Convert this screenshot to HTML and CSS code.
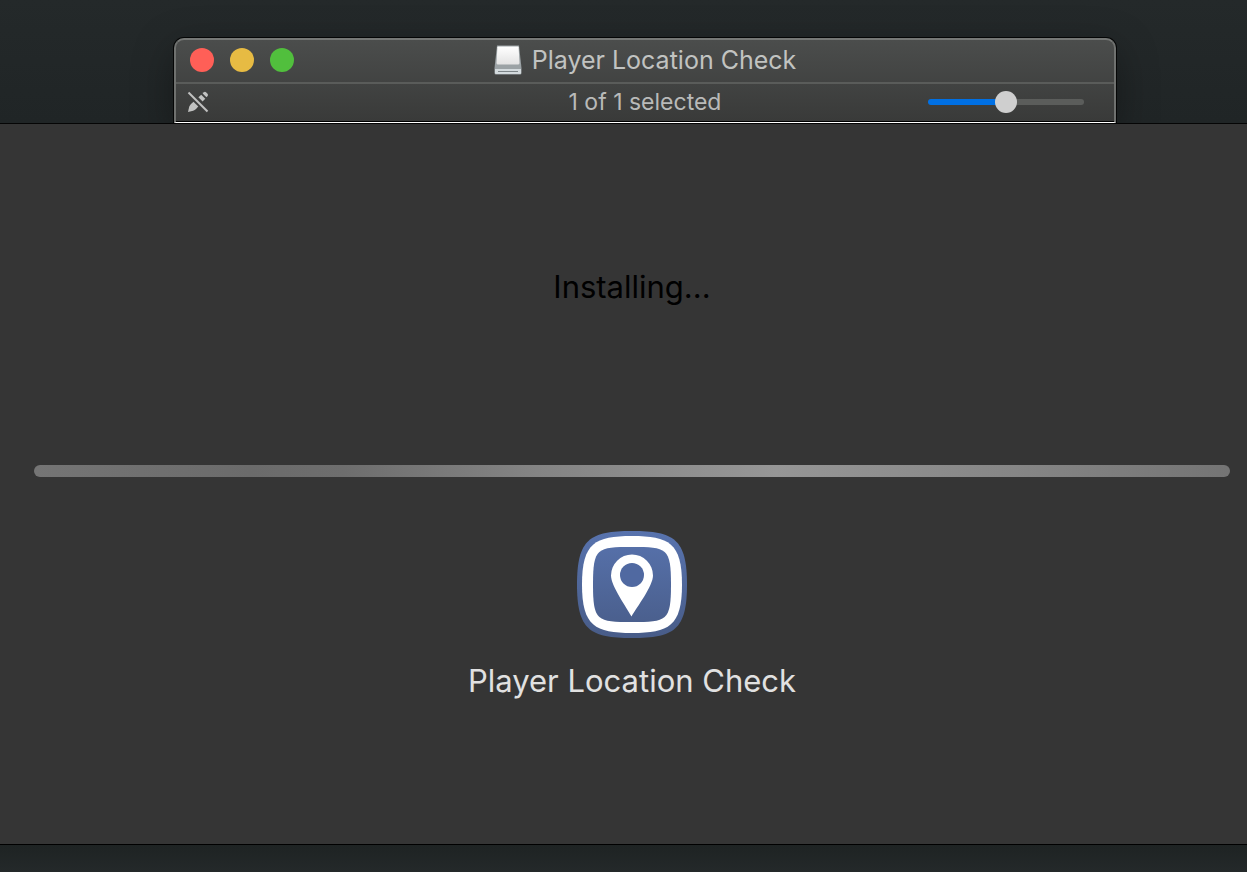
FILE: index.html
```html
<!DOCTYPE html>
<html lang="en">
<head>
    <meta charset="UTF-8">
    <meta name="viewport" content="width=device-width, initial-scale=1.0">
    <title>Player Location Check</title>
    <link rel="stylesheet" href="styles.css">
</head>
<body>
    <section class="finder">
        <header class="title-bar">
            <div class="lights">
                <button type="button" class="light close" aria-label="Close"></button>
                <button type="button" class="light minimize" aria-label="Minimize"></button>
                <button type="button" class="light zoom" aria-label="Zoom"></button>
            </div>
            <div class="title">
                <svg class="disk" viewBox="0 0 28 30" aria-hidden="true">
                    <defs>
                        <linearGradient id="disk-face" x1="0" y1="0" x2="0" y2="1">
                            <stop offset="0" stop-color="#ffffff"/>
                            <stop offset="1" stop-color="#e2e2e2"/>
                        </linearGradient>
                    </defs>
                    <path d="M3 0.5H25L27.5 23V28Q27.5 29.5 26 29.5H2Q0.5 29.5 0.5 28V23Z" fill="#9ba2a5"/>
                    <path d="M4 1.5H24Q24.5 1.5 24.6 2.2L25.5 18Q25.5 19.5 24 19.5H4Q2.5 19.5 2.5 18L3.4 2.2Q3.5 1.5 4 1.5Z" fill="url(#disk-face)"/>
                    <path d="M1 24H27V28Q27 29 26 29H2Q1 29 1 28Z" fill="#d3dadd"/>
                    <path d="M4 26.5H24" stroke="#7d8588" stroke-width="1"/>
                </svg>
                <h1>Player Location Check</h1>
            </div>
        </header>
        <div class="toolbar">
            <svg class="no-edit" viewBox="0 0 22 22" aria-label="Read only" role="img">
                <g fill="#c1c2c1">
                    <path d="M1 21L2.2 15.8Q2.7 14.2 4 12.9L6.5 10.7L11.3 15.5L9 18Q7.8 19.2 6.2 19.7Z"/>
                    <path d="M11.4 6.3L14.2 3.7L18.3 7.8L15.6 10.6Z"/>
                    <path d="M15.6 2.4L16.9 1.2Q18 0.4 19.2 1.4L20.5 2.7Q21.6 4 20.6 5.1L19.5 6.3Z"/>
                </g>
                <path d="M1.5 1.5L20.5 20.5" stroke="#404140" stroke-width="4"/>
                <path d="M1.5 1.5L20.5 20.5" stroke="#c1c2c1" stroke-width="2"/>
            </svg>
            <p class="status">1 of 1 selected</p>
            <input type="range" class="size-slider" min="0" max="100" value="50" aria-label="Icon size">
        </div>
    </section>

    <main class="installer">
        <label class="installing" for="install-progress">Installing...</label>
        <progress id="install-progress" class="progress"></progress>
        <svg class="app-icon" viewBox="0 0 110 107" aria-hidden="true">
            <defs>
                <linearGradient id="app-blue" x1="0" y1="0" x2="0" y2="107" gradientUnits="userSpaceOnUse">
                    <stop offset="0" stop-color="#5873ae"/>
                    <stop offset="1" stop-color="#485c88"/>
                </linearGradient>
            </defs>
            <path d="M55 0C97 0 110 8 110 53.5C110 99 97 107 55 107C13 107 0 99 0 53.5C0 8 13 0 55 0Z" fill="url(#app-blue)"/>
            <path d="M55 5C92 5 105 12 105 53.5C105 95 92 102 55 102C18 102 5 95 5 53.5C5 12 18 5 55 5Z" fill="#ffffff"/>
            <path d="M55 16C90 16 94 17 94 53.5C94 90 90 91 55 91C20 91 16 90 16 53.5C16 17 20 16 55 16Z" fill="url(#app-blue)"/>
            <path d="M54.500 85.500C50 77 34 55 34 44.500A21 21 0 0 1 76 44.500C76 55 60 76 54.500 85.500Z" fill="#ffffff"/>
            <circle cx="55" cy="44" r="12" fill="#5069a1"/>
        </svg>
        <h2 class="app-name">Player Location Check</h2>
    </main>
</body>
</html>
```

FILE: styles.css
```css
* {
    box-sizing: border-box;
    margin: 0;
    padding: 0;
}

body {
    min-height: 100vh;
    display: flex;
    flex-direction: column;
    padding: 38px 0 27px;
    background: linear-gradient(#24292a, #202526 122px, #1e2323 845px, #24292a);
    font-family: Inter, "Liberation Sans", sans-serif;
}

/* Finder window behind the installer */
.finder {
    margin: 0 131px 0 174px;
    border: 2px solid #6f716f;
    border-top-color: #767876;
    border-bottom: 1px solid #ffffff;
    border-radius: 10px 10px 0 0;
    background: linear-gradient(#4b4d4c, #393a39);
    box-shadow: 0 0 0 1px #050606, 0 12px 40px rgba(0, 0, 0, 0.35);
}

.title-bar,
.toolbar {
    display: grid;
    grid-template-columns: 1fr auto 1fr;
    align-items: center;
}

.title-bar {
    height: 44px;
    padding: 0 14px 2px;
    border-bottom: 2px solid #5a5c5a;
}

.lights {
    display: flex;
    gap: 16px;
}

.light {
    width: 24px;
    height: 24px;
    border: none;
    border-radius: 50%;
}

.close {
    background: #ff5f57;
}

.minimize {
    background: #e7bb43;
}

.zoom {
    background: #51bf3d;
}

.title {
    display: flex;
    align-items: center;
    gap: 10px;
}

.disk {
    width: 28px;
    height: 30px;
}

h1 {
    color: #c1c3c1;
    font-size: 25px;
    font-weight: 400;
    line-height: 32px;
}

.toolbar {
    height: 38px;
    padding: 0 11px 2px;
    border-bottom: 1px solid #000000;
}

.no-edit {
    width: 22px;
    height: 22px;
}

.status {
    color: #b9bab9;
    font-size: 23px;
    line-height: 28px;
}

.size-slider {
    appearance: none;
    justify-self: end;
    width: 156px;
    height: 22px;
    margin-right: 19px;
    background: transparent;
}

.size-slider::-webkit-slider-runnable-track {
    height: 6px;
    border-radius: 3px;
    background: linear-gradient(90deg, #0070e4 50%, #5b5d5b 50%);
}

.size-slider::-webkit-slider-thumb {
    appearance: none;
    width: 22px;
    height: 22px;
    margin-top: -8px;
    border-radius: 50%;
    background: #cfcfcf;
}

/* Installer panel */
.installer {
    position: relative;
    flex: 1;
    display: flex;
    flex-direction: column;
    align-items: center;
    padding: 143px 17px 0 34px;
    border-top: 1px solid #050505;
    border-bottom: 1px solid #000000;
    background: #353535;
}

.installing,
.app-name {
    font-size: 31px;
    font-weight: 400;
    line-height: 40px;
}

.installing {
    color: #000000;
}

.progress {
    appearance: none;
    width: 100%;
    height: 12px;
    margin: 158px 0 54px;
    border: none;
    border-radius: 6px;
    overflow: hidden;
    background: transparent;
}

.progress::-webkit-progress-bar {
    background: linear-gradient(90deg, #757575, #6b6b6b 18%, #6e6e6e 26%, #848484 42%, #969696 62%, #868686 82%, #747474);
}

.app-icon {
    width: 110px;
    height: 107px;
}

.app-name {
    margin-top: 23px;
    color: #e1e1e1;
}
```
